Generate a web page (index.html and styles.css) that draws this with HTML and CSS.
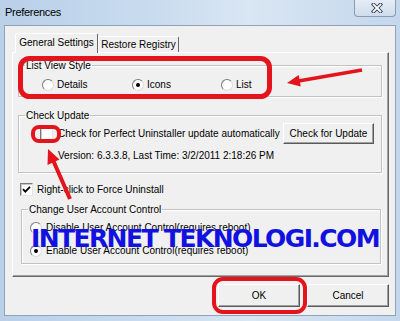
FILE: index.html
```html
<!DOCTYPE html>
<html>
<head>
<meta charset="utf-8">
<title>Preferences</title>
<link rel="stylesheet" href="styles.css">
</head>
<body>
<div class="window">
  <div class="titlebar">
    <span class="title">Preferences</span>
    <div class="close">
      <svg class="close-x" width="12" height="10" viewBox="0 0 12 10">
        <path d="M2.5 1.5L9.5 8.5M9.5 1.5L2.5 8.5" stroke="#2f3e52" stroke-width="3.6" stroke-linecap="square" fill="none"/>
        <path d="M2.5 1.5L9.5 8.5M9.5 1.5L2.5 8.5" stroke="#ffffff" stroke-width="1.8" stroke-linecap="square" fill="none"/>
      </svg>
    </div>
  </div>
  <div class="client">
    <div class="tabs">
      <div class="tab tab-active">General Settings</div>
      <div class="tab">Restore Registry</div>
    </div>
    <div class="panel">
      <fieldset class="group group-view">
        <legend>List View Style</legend>
        <div class="view-options">
          <span class="opt"><span class="radio"></span>Details</span>
          <span class="opt"><span class="radio radio-on"></span>Icons</span>
          <span class="opt"><span class="radio"></span>List</span>
        </div>
      </fieldset>
      <fieldset class="group group-update">
        <legend>Check Update</legend>
        <div class="update-body">
          <div class="update-row">
            <span class="check"></span>
            <span class="update-label">Check for Perfect Uninstaller update automatically</span>
            <button class="btn btn-update">Check for Update</button>
          </div>
          <div class="version">Version: 6.3.3.8, Last Time: 3/2/2011 2:18:26 PM</div>
        </div>
      </fieldset>
      <div class="force-row">
        <span class="check"><svg width="11" height="11" viewBox="0 0 11 11"><path d="M2 5.2L4.3 7.6L9 2.8" stroke="#000" stroke-width="1.8" fill="none"/></svg></span>Right-click to Force Uninstall
      </div>
      <fieldset class="group group-uac">
        <legend>Change User Account Control</legend>
        <div class="uac-body">
          <div class="uac-row"><span class="radio"></span>Disable User Account Control(requires reboot)</div>
          <div class="uac-row uac-row-2"><span class="radio radio-on"></span>Enable User Account Control(requires reboot)</div>
        </div>
      </fieldset>
    </div>
    <div class="actions">
      <button class="btn btn-action">OK</button>
      <button class="btn btn-action">Cancel</button>
    </div>
  </div>
</div>
<svg class="annotations" width="400" height="321" viewBox="0 0 400 321">
  <rect x="20.5" y="58.5" width="249" height="38" rx="9" fill="none" stroke="#e3141c" stroke-width="5"/>
  <rect x="33" y="127" width="26" height="14" rx="6" fill="none" stroke="#e3141c" stroke-width="4"/>
  <rect x="214" y="279" width="91" height="33" rx="9" fill="none" stroke="#e3141c" stroke-width="4"/>
  <line x1="362" y1="70" x2="297" y2="81.3" stroke="#e3141c" stroke-width="3.5"/>
  <polygon points="287,83 300.7,86.6 298.7,75" fill="#e3141c"/>
  <line x1="70" y1="199" x2="53" y2="160" stroke="#e3141c" stroke-width="4"/>
  <polygon points="48,149 59.5,159.5 47.5,165" fill="#e3141c"/>
</svg>
<div class="watermark">INTERNET TEKNOLOGI.COM</div>
</body>
</html>
```

FILE: styles.css
```css
* { box-sizing: border-box; }
html, body { margin: 0; padding: 0; }
body {
  width: 400px;
  height: 321px;
  overflow: hidden;
  position: relative;
  font-family: "Liberation Sans", Arial, sans-serif;
  font-size: 10px;
  color: #000;
}
.window {
  width: 400px;
  height: 321px;
  display: flex;
  flex-direction: column;
  background: linear-gradient(to right, #b9d0e9 0%, #cadcef 40%, #d9e6f3 62%, #c4d7ec 100%);
}
.titlebar {
  height: 25px;
  flex: none;
  display: flex;
  justify-content: space-between;
  align-items: flex-start;
}
.title {
  font-size: 11px;
  letter-spacing: -0.3px;
  line-height: 13px;
  padding: 6px 0 0 5px;
}
.close {
  width: 42px;
  height: 17px;
  margin-right: 4px;
  border: 1px solid #8a9cb3;
  border-top: none;
  border-radius: 0 0 4px 4px;
  background: linear-gradient(#e5edf6, #cfdcec);
  display: flex;
  align-items: center;
  justify-content: center;
  padding-left: 4px;
}
.client {
  height: 291px;
  flex: none;
  margin: 0 4px 0 4px;
  background: #f0f0f0;
  border: 1px solid #8fa2ba;
  padding: 7px 6px 0 7px;
  display: flex;
  flex-direction: column;
}
.tabs {
  display: flex;
  align-items: flex-end;
  height: 19px;
  padding-left: 3px;
}
.tab {
  height: 16px;
  width: 81px;
  border: 1px solid;
  border-color: #fff #696969 transparent #fff;
  border-bottom: none;
  border-radius: 2px 2px 0 0;
  text-align: center;
  line-height: 15px;
  background: #f0f0f0;
}
.tab-active {
  height: 20px;
  width: 83px;
  margin-bottom: -1px;
  position: relative;
  z-index: 1;
  line-height: 18px;
}
.panel {
  height: 225px;
  border: 1px solid;
  border-color: #fff #696969 #696969 #fff;
  box-shadow: inset -1px -1px #a0a0a0;
  padding: 6px 6px 0 5px;
  display: flex;
  flex-direction: column;
}
.group {
  margin: 0;
  padding: 0;
  min-width: 0;
  border: 1px solid #c2c2c2;
  box-shadow: inset 1px 1px #fff, 1px 1px #fff;
}
.group legend {
  margin-left: 6px;
  padding: 0 1px;
  line-height: 13px;
}
.view-options {
  display: grid;
  grid-template-columns: 90px 89px auto;
  line-height: 13px;
  padding: 6px 0 5px 23px;
}
.opt, .uac-row {
  display: flex;
  align-items: center;
  height: 13px;
}
.radio {
  width: 12px;
  height: 12px;
  border-radius: 50%;
  border: 1px solid;
  border-color: #7a7a7a #dcdcdc #dcdcdc #7a7a7a;
  background: #fff;
  margin-right: 3px;
  display: flex;
  align-items: center;
  justify-content: center;
  flex: none;
}
.radio-on::after {
  content: "";
  width: 4px;
  height: 4px;
  border-radius: 50%;
  background: #000;
}
.group-update {
  margin-top: 12px;
}
.update-body {
  padding: 1px 7px 10px 21px;
}
.update-row {
  display: flex;
  align-items: center;
  height: 21px;
}
.check {
  width: 13px;
  height: 13px;
  flex: none;
  background: #fff;
  border: 1px solid;
  border-color: #7a7a7a #e6e6e6 #e6e6e6 #7a7a7a;
  box-shadow: inset 1px 1px #c8c8c8;
  margin-right: 5px;
  display: flex;
  align-items: center;
  justify-content: center;
}
.update-label { line-height: 13px; }
.btn {
  font-family: inherit;
  font-size: 10px;
  color: #000;
  background: #f0f0f0;
  border: 1px solid;
  border-color: #fff #5a5a5a #5a5a5a #fff;
  box-shadow: inset -1px -1px #a0a0a0;
  padding: 0;
}
.btn-update {
  margin-left: auto;
  width: 91px;
  height: 21px;
}
.version {
  margin: 5px 0 0 18px;
  line-height: 13px;
}
.force-row {
  margin: 10px 0 0 2px;
  display: flex;
  align-items: center;
  height: 13px;
}
.force-row .check { margin-right: 4px; }
.group-uac {
  margin: 7px 1px 0 3px;
}
.uac-body {
  padding: 5px 0 6px 8px;
}
.uac-row .radio { margin-right: 4px; }
.uac-row-2 { margin-top: 10px; }
.actions {
  display: flex;
  justify-content: flex-end;
  gap: 7px;
  margin-top: 7px;
}
.btn-action {
  width: 82px;
  height: 23px;
}
.annotations {
  position: absolute;
  left: 0;
  top: 0;
  pointer-events: none;
}
.watermark {
  position: absolute;
  left: 31px;
  top: 226px;
  font-family: "DejaVu Sans", Verdana, sans-serif;
  font-weight: bold;
  font-size: 25px;
  line-height: 25px;
  letter-spacing: -1.6px;
  color: #1212e0;
  white-space: nowrap;
}
```
